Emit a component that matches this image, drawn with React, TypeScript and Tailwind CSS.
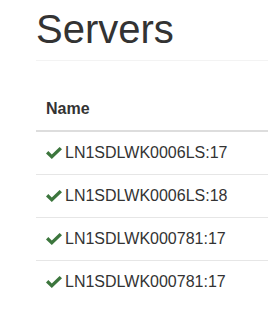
const servers = [
    "LN1SDLWK0006LS:17",
    "LN1SDLWK0006LS:18",
    "LN1SDLWK000781:17",
    "LN1SDLWK000781:17",
]

const CheckIcon = () => (
    <svg width="16" height="12" viewBox="0 0 16 12" className="shrink-0 mr-[3px]">
        <path d="M0 6.4 L2.3 4.1 L5.8 7.5 L13.6 0 L16 2.3 L5.8 12 Z" fill="#3c763d" />
    </svg>
)

const App = () => {
    return (
        <div className="min-h-[320px] bg-white pl-[36px] pt-[7px] text-[#333] font-['Liberation_Sans',Arial,sans-serif]">
            <h1 className="text-[40px] leading-[44px] font-normal pb-[9px] border-b border-[#f3f3f3]">
                Servers
            </h1>
            <table className="mt-[27px] w-full border-collapse text-[16px] leading-[22px]">
                <thead>
                    <tr>
                        <th className="text-left font-bold px-[10px] py-[10px] border-b-2 border-[#ddd]">Name</th>
                    </tr>
                </thead>
                <tbody>
                    {servers.map((s, i) => (
                        <tr key={i}>
                            <td className={"px-[10px] py-[10px] " + (i < servers.length - 1 ? "border-b border-[#e6e6e6]" : "")}>
                                <div className="flex items-center">
                                    <CheckIcon />
                                    <span>{s}</span>
                                </div>
                            </td>
                        </tr>
                    ))}
                </tbody>
            </table>
        </div>
    )
}

export default App
